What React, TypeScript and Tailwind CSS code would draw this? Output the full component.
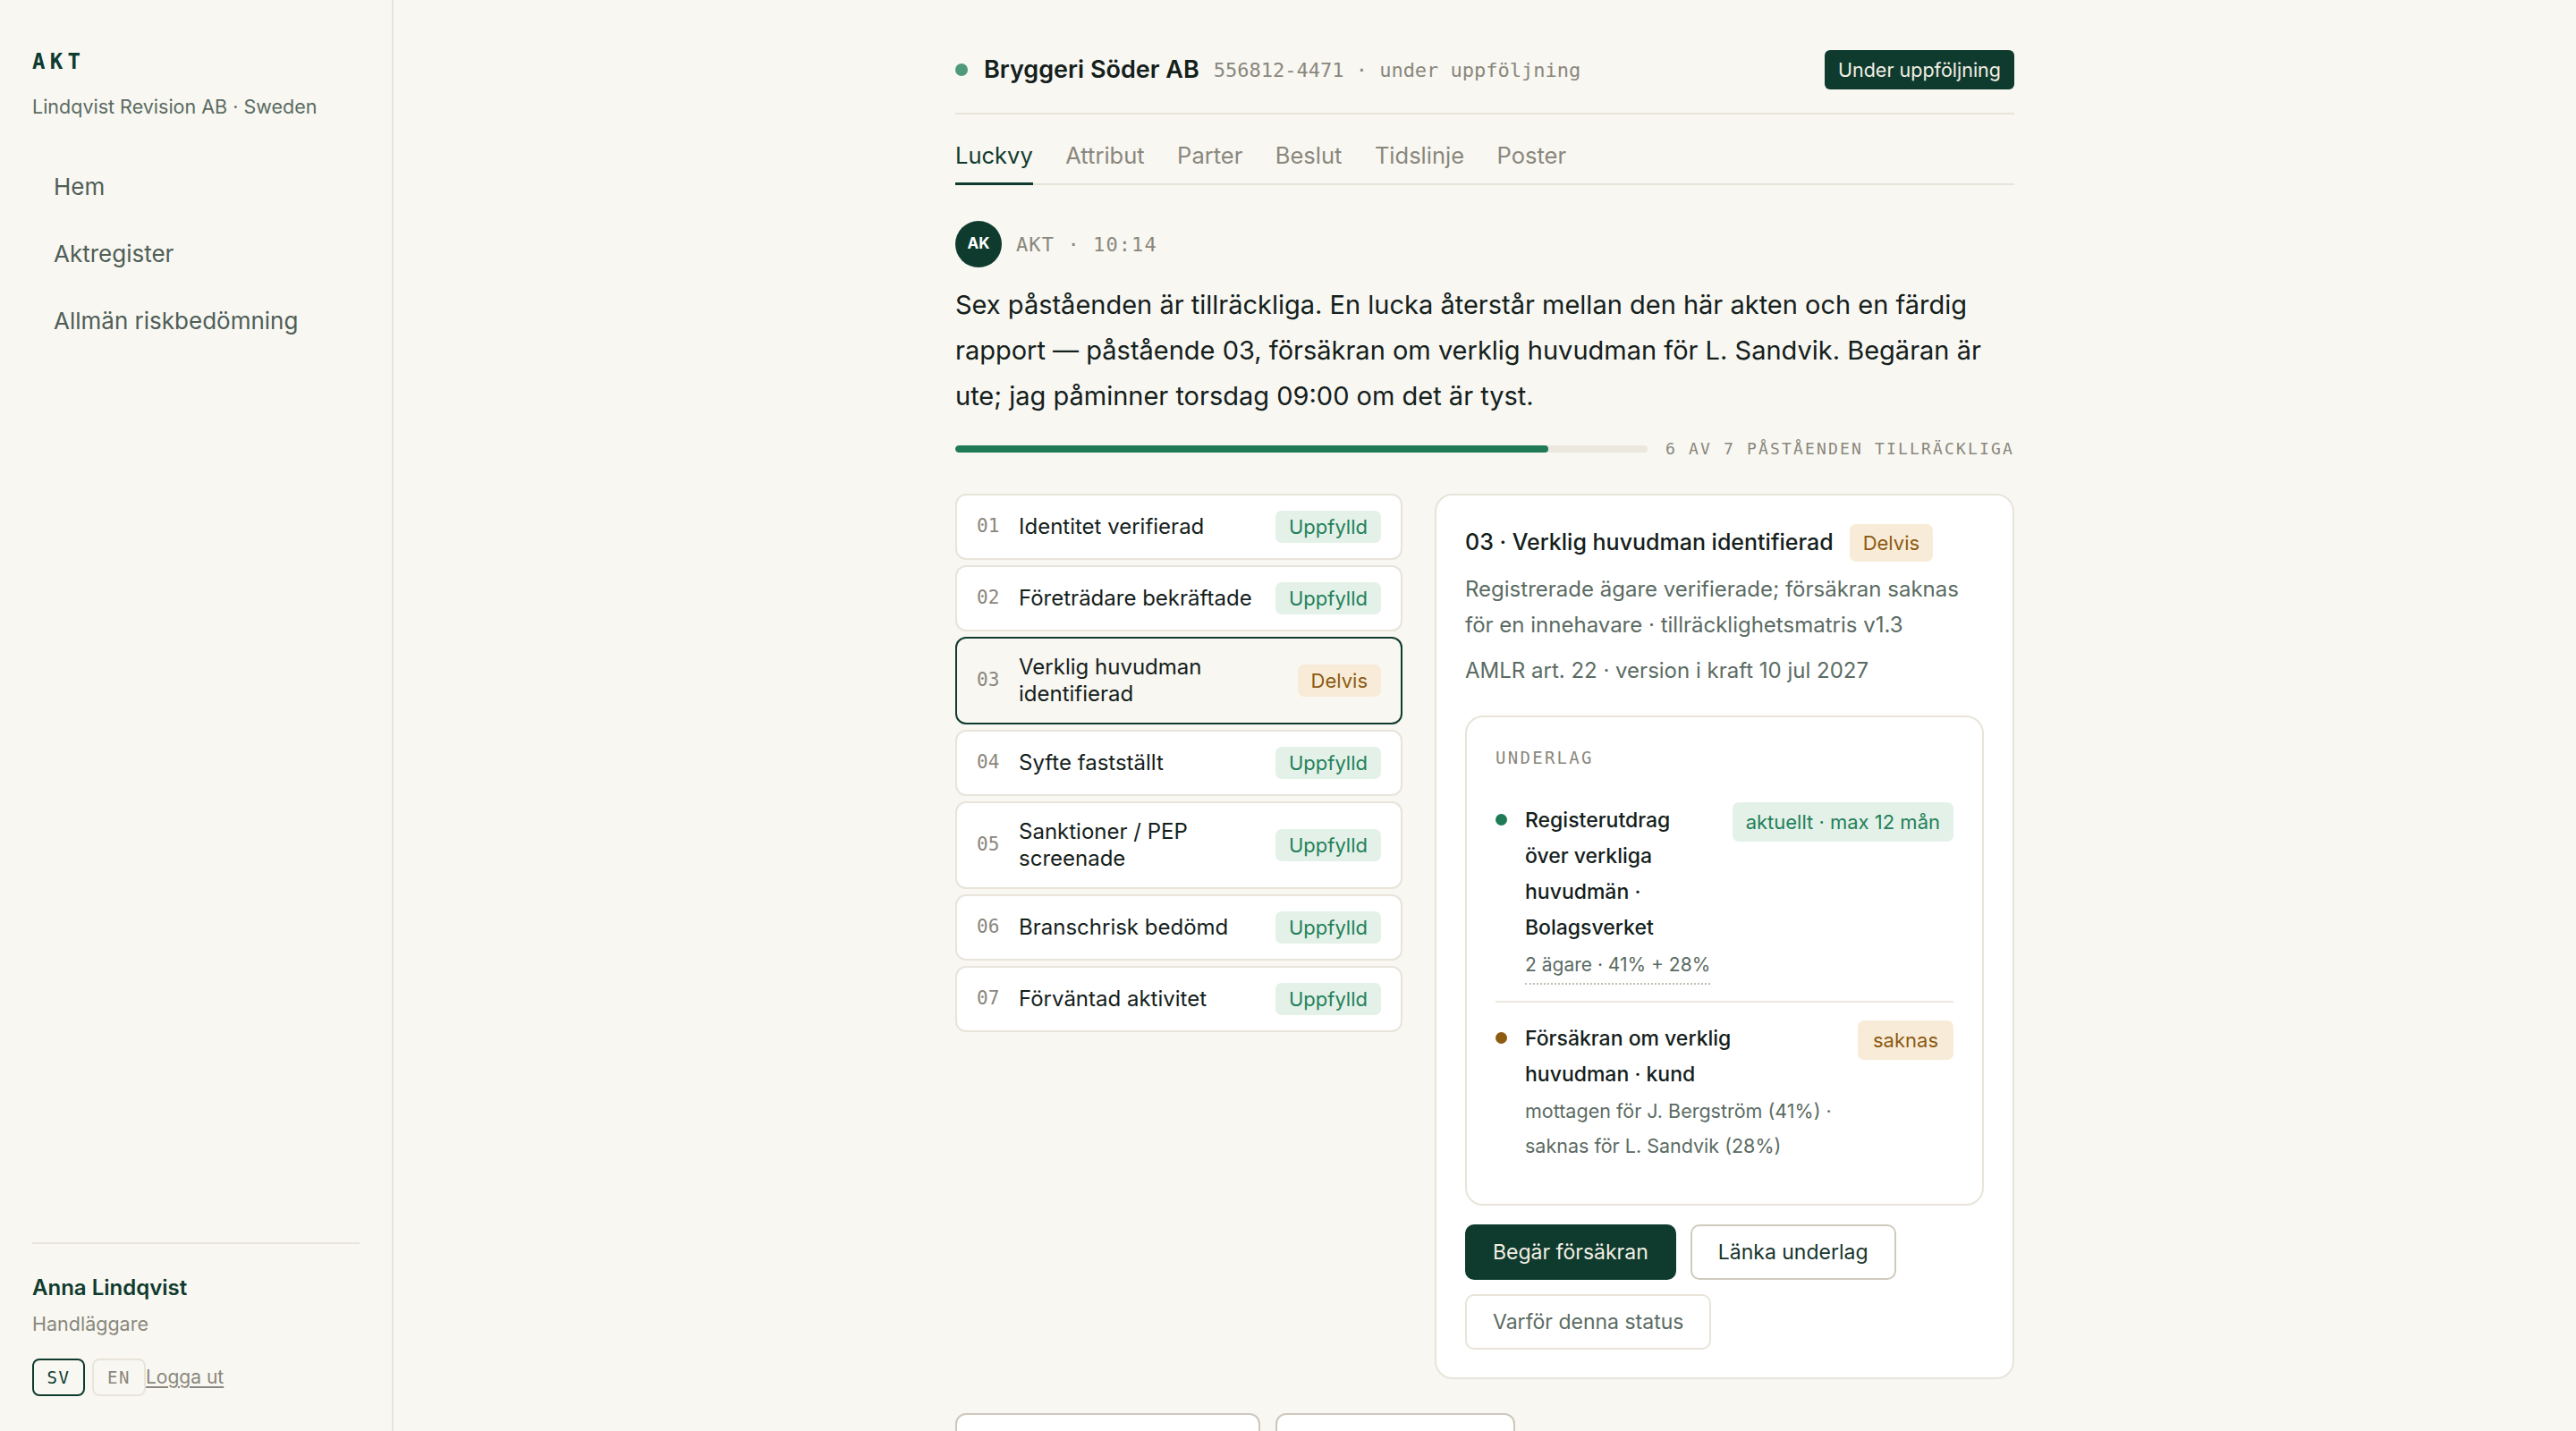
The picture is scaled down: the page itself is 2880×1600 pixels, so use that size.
import React from 'react';

type Status = 'ok' | 'partial';

interface Criterion {
  no: string;
  label: string;
  status: Status;
}

const criteria: Criterion[] = [
  { no: '01', label: 'Identitet verifierad', status: 'ok' },
  { no: '02', label: 'Företrädare bekräftade', status: 'ok' },
  { no: '03', label: 'Verklig huvudman identifierad', status: 'partial' },
  { no: '04', label: 'Syfte fastställt', status: 'ok' },
  { no: '05', label: 'Sanktioner / PEP screenade', status: 'ok' },
  { no: '06', label: 'Branschrisk bedömd', status: 'ok' },
  { no: '07', label: 'Förväntad aktivitet', status: 'ok' },
];

const tabs = ['Luckvy', 'Attribut', 'Parter', 'Beslut', 'Tidslinje', 'Poster'];
const navItems = ['Hem', 'Aktregister', 'Allmän riskbedömning'];

const mono = "font-['DejaVu_Sans_Mono',monospace]";

const Badge: React.FC<{ status: Status; children: React.ReactNode; className?: string }> = ({
  status,
  children,
  className = '',
}) => (
  <span
    className={`inline-flex shrink-0 items-center rounded-[7px] text-[22px] ${
      status === 'ok' ? 'bg-[#e4f1e8] text-[#23805a]' : 'bg-[#f8ecd8] text-[#8c5a12]'
    } ${className}`}
  >
    {children}
  </span>
);

const Sidebar: React.FC = () => (
  <aside className="flex h-screen w-[440px] shrink-0 flex-col border-r-2 border-[#e8e4da] px-[36px] pt-[52px] pb-[39px]">
    <div className={`${mono} text-[24px] leading-[34px] font-bold tracking-[0.22em] text-[#0f3b2e]`}>AKT</div>
    <div className="mt-[20px] text-[21.5px] leading-[27px] text-[#5b6b63]">Lindqvist Revision AB · Sweden</div>
    <nav className="mt-[38px] flex flex-col">
      {navItems.map((item) => (
        <a key={item} href="#" className="px-[24px] py-[21.5px] text-[26px] leading-[32px] text-[#4f5e57]">
          {item}
        </a>
      ))}
    </nav>
    <div className="mt-auto border-t-2 border-[#e8e4da] pt-[34px]">
      <div className="text-[24px] leading-[30px] font-semibold text-[#0f3b2e]">Anna Lindqvist</div>
      <div className="mt-[11px] text-[21.5px] leading-[28px] text-[#8a877c]">Handläggare</div>
      <div className="mt-[25px] flex items-center">
        <button
          className={`${mono} h-[42px] w-[59px] rounded-[8px] border-2 border-[#0f3b2e] text-[19px] tracking-[0.08em] text-[#0f3b2e]`}
        >
          SV
        </button>
        <button
          className={`${mono} ml-[8px] h-[42px] w-[60px] rounded-[8px] border-2 border-[#e8e4da] text-[19px] tracking-[0.08em] text-[#8a877c]`}
        >
          EN
        </button>
        <a href="#" className="text-[21px] text-[#8a877c] underline underline-offset-[3px]">
          Logga ut
        </a>
      </div>
    </div>
  </aside>
);

const CriterionRow: React.FC<{ item: Criterion; selected: boolean }> = ({ item, selected }) => (
  <div
    className={`flex items-center gap-[21px] rounded-[12px] border-2 px-[22px] py-[17px] ${
      selected ? 'border-[#0f3b2e] bg-[#f8f7f2]' : 'border-[#e8e4da] bg-white'
    }`}
  >
    <span className={`${mono} w-[26px] shrink-0 text-[21px] text-[#8a877c]`}>{item.no}</span>
    <span className="flex-1 text-[24px] leading-[30px] text-[#14201b]">{item.label}</span>
    <Badge status={item.status} className="h-[36px] px-[15px]">
      {item.status === 'ok' ? 'Uppfylld' : 'Delvis'}
    </Badge>
  </div>
);

const DetailPanel: React.FC = () => (
  <div className="rounded-[20px] border-2 border-[#e8e4da] bg-white px-[32px] pt-[32px] pb-[31px]">
    <div className="flex items-center gap-[18px]">
      <h2 className="text-[25px] font-medium text-[#14201b]">03 · Verklig huvudman identifierad</h2>
      <Badge status="partial" className="h-[42px] px-[15px]">
        Delvis
      </Badge>
    </div>
    <p className="mt-[11px] text-[24px] leading-[40px] text-[#5b6b63]">
      Registrerade ägare verifierade; försäkran saknas för en innehavare · tillräcklighetsmatris v1.3
    </p>
    <p className="mt-[11px] text-[24px] leading-[40px] text-[#5b6b63]">AMLR art. 22 · version i kraft 10 jul 2027</p>

    <div className="mt-[30px] rounded-[20px] border-2 border-[#e8e4da] px-[32px] pt-[32px] pb-[25px]">
      <div className={`${mono} mb-[17px] text-[19px] leading-[26px] tracking-[0.12em] text-[#8a877c]`}>UNDERLAG</div>

      <div className="flex items-start gap-[20px] pt-[20px] pb-[18px]">
        <span className="mt-[13px] h-[13px] w-[13px] shrink-0 rounded-full bg-[#1f7a55]" />
        <div className="flex-1">
          <div className="text-[23px] leading-[40px] font-medium text-[#14201b]">
            Registerutdrag över verkliga huvudmän · Bolagsverket
          </div>
          <span className="mt-[2px] inline-block border-b-2 border-dotted border-[#c2bdb0] text-[21px] leading-[40px] text-[#5b6b63]">
            2 ägare · 41% + 28%
          </span>
        </div>
        <Badge status="ok" className="h-[44px] px-[15px] text-[21px]">
          aktuellt · max 12 mån
        </Badge>
      </div>

      <div className="flex items-start gap-[20px] border-t-2 border-[#ece8df] py-[20px]">
        <span className="mt-[13px] h-[13px] w-[13px] shrink-0 rounded-full bg-[#8f5a12]" />
        <div className="flex-1">
          <div className="text-[23px] leading-[40px] font-medium text-[#14201b]">Försäkran om verklig huvudman · kund</div>
          <div className="mt-[2px] text-[21.5px] leading-[39px] text-[#5b6b63]">
            mottagen för J. Bergström (41%) · saknas för L. Sandvik (28%)
          </div>
        </div>
        <Badge status="partial" className="h-[44px] px-[17px] text-[21px]">
          saknas
        </Badge>
      </div>
    </div>

    <div className="mt-[21px] flex flex-wrap gap-[16px]">
      <button className="rounded-[10px] border-2 border-[#0f3b2e] bg-[#0f3b2e] px-[29px] py-[14px] text-[23px] leading-[30px] text-[#f3efe4]">
        Begär försäkran
      </button>
      <button className="rounded-[10px] border-2 border-[#cfcabd] bg-white px-[29px] py-[14px] text-[23px] leading-[30px] text-[#17352b]">
        Länka underlag
      </button>
      <button className="rounded-[10px] border-2 border-[#e8e4da] bg-white px-[29px] py-[14px] text-[23px] leading-[30px] text-[#5b6b63]">
        Varför denna status
      </button>
    </div>
  </div>
);

const App: React.FC = () => {
  const done = criteria.filter((c) => c.status === 'ok').length;
  const progress = (done / criteria.length) * 100;

  return (
    <div className="flex h-screen overflow-hidden bg-[#f8f7f2] font-['Inter',sans-serif] text-[#14201b]">
      <Sidebar />

      <main className="flex-1 overflow-hidden">
        <div className="mx-auto w-[1184px] pb-[60px]">
          {/* case header */}
          <div className="flex items-center justify-between border-b-2 border-[#e8e4da] pt-[56px] pb-[26px]">
            <div className="flex items-center">
              <span className="h-[14px] w-[14px] rounded-full bg-[#4f9a7a]" />
              <span className="ml-[18px] text-[27px] font-semibold text-[#14201b]">Bryggeri Söder AB</span>
              <span className={`${mono} ml-[16px] text-[22px] text-[#8a877c]`}>556812-4471 · under uppföljning</span>
            </div>
            <span className="flex h-[44px] items-center rounded-[6px] bg-[#0f3b2e] px-[15px] text-[21.5px] text-[#f3efe4]">
              Under uppföljning
            </span>
          </div>

          {/* tabs */}
          <div className="mt-[30px] flex gap-[36.5px] border-b-2 border-[#e8e4da]">
            {tabs.map((tab, i) => (
              <button
                key={tab}
                className={`-mb-[2px] border-b-[3px] pb-[14px] text-[25.5px] leading-[32px] ${
                  i === 0 ? 'border-[#0f3b2e] text-[#0f3b2e]' : 'border-transparent text-[#8a877c]'
                }`}
              >
                {tab}
              </button>
            ))}
          </div>

          {/* assistant message */}
          <div className="mt-[40px] flex items-center gap-[16px]">
            <span className="flex h-[52px] w-[52px] items-center justify-center rounded-full bg-[#0f3b2e] text-[17px] font-bold text-white">
              AK
            </span>
            <span className={`${mono} text-[22px] tracking-[0.05em] text-[#8a877c]`}>AKT · 10:14</span>
          </div>
          <p className="mt-[16px] text-[29px] leading-[51px] text-[#14201b]">
            Sex påståenden är tillräckliga. En lucka återstår mellan den här akten och en färdig rapport — påstående 03,
            försäkran om verklig huvudman för L. Sandvik. Begäran är ute; jag påminner torsdag 09:00 om det är tyst.
          </p>

          <div className="mt-[24px] flex items-center gap-[20px]">
            <div className="h-[8px] flex-1 overflow-hidden rounded-full bg-[#ece8df]">
              <div className="h-full rounded-full bg-[#1f7a55]" style={{ width: `${progress}%` }} />
            </div>
            <span className={`${mono} text-[18px] leading-[20px] tracking-[0.12em] text-[#8a877c]`}>
              {done} AV {criteria.length} PÅSTÅENDEN TILLRÄCKLIGA
            </span>
          </div>

          {/* criteria + detail */}
          <div className="mt-[40px] grid grid-cols-[500px_1fr] items-start gap-[36px]">
            <div className="flex flex-col gap-[6px]">
              {criteria.map((c) => (
                <CriterionRow key={c.no} item={c} selected={c.no === '03'} />
              ))}
            </div>
            <DetailPanel />
          </div>

          <div className="mt-[38px] flex gap-[17px]">
            <button className="w-[341px] rounded-[12px] border-2 border-[#cdc8ba] bg-white py-[14px] pl-[30px] text-left text-[23px] leading-[30px] text-[#17352b]">
              Förhandsvisa rapport
            </button>
            <button className="w-[268px] rounded-[12px] border-2 border-[#cdc8ba] bg-white py-[14px] pl-[30px] text-left text-[23px] leading-[30px] text-[#17352b]">
              Granska logg
            </button>
          </div>
        </div>
      </main>
    </div>
  );
};

export default App;
